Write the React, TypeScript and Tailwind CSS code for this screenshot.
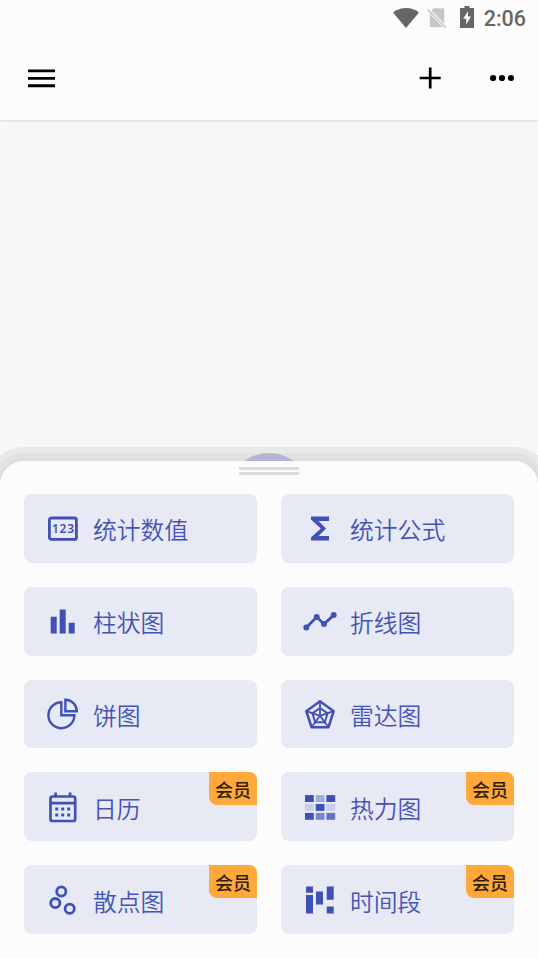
import type { ReactNode } from "react";

const PRIMARY = "#3f51b5";

function Icon({ children }: { children: ReactNode }) {
  return (
    <svg className="block h-9 w-9 shrink-0 text-[#3f51b5]" viewBox="0 0 36 36" fill="none">
      {children}
    </svg>
  );
}

function NumbersIcon() {
  return (
    <Icon>
      <rect x="4.4" y="8" width="27" height="21.4" rx="2" stroke="currentColor" strokeWidth="2.8" />
      <text
        x="18.4"
        y="23"
        textAnchor="middle"
        fill="currentColor"
        className="font-['Noto_Sans',sans-serif] text-[12px] font-semibold"
        letterSpacing="0.8"
      >
        123
      </text>
    </Icon>
  );
}

function SigmaIcon() {
  return (
    <Icon>
      <path
        transform="translate(0 .5) scale(1.5)"
        d="M18 4H6v2l6.5 6L6 18v2h12v-3h-7l5-5-5-5h7z"
        fill="currentColor"
      />
    </Icon>
  );
}

function BarsIcon() {
  return (
    <Icon>
      <path d="M5.7 13.8h6v16.7h-6zM14.7 6.5h6v24h-6zM23.7 19.8h6v10.7h-6z" fill="currentColor" />
    </Icon>
  );
}

function LineIcon() {
  return (
    <Icon>
      <path d="M4.3 24.5 14.7 14.1 22 21.1 31.7 12.1" stroke="currentColor" strokeWidth="2.8" />
      <g fill="currentColor">
        <circle cx="4.3" cy="24.5" r="3" />
        <circle cx="14.7" cy="14.1" r="3" />
        <circle cx="22" cy="21.1" r="3" />
        <circle cx="31.7" cy="12.1" r="3" />
      </g>
    </Icon>
  );
}

function PieIcon() {
  return (
    <Icon>
      <g stroke="currentColor" strokeWidth="2.4">
        <path d="M16.3 6.2V19.3H29.4A13 13 0 1 1 16.3 6.2z" />
        <path d="M20.4 3.8V15.3H31.8A11.5 11.5 0 0 0 20.4 3.8z" />
      </g>
    </Icon>
  );
}

function RadarIcon() {
  return (
    <Icon>
      <g stroke="currentColor" strokeLinejoin="round">
        <path d="M18 5.2 31.7 15.2 26.5 31.2H9.5L4.3 15.2z" strokeWidth="2.6" />
        <path d="M18 12 25.6 17.4 22.7 26.2H13.3L10.4 17.4z" strokeWidth="2" />
        <path
          d="M18 19.8V5.2M18 19.8 31.7 15.2M18 19.8 26.5 31.2M18 19.8 9.5 31.2M18 19.8 4.3 15.2"
          strokeWidth="1.8"
        />
      </g>
    </Icon>
  );
}

function CalendarIcon() {
  return (
    <Icon>
      <rect x="5.5" y="7.5" width="24.7" height="24.5" rx="2" stroke="currentColor" strokeWidth="2.7" />
      <path d="M5.5 14.2h24.7M10.6 3.5v4M25.1 3.5v4" stroke="currentColor" strokeWidth="2.7" />
      <path
        d="M10.2 18.4h3v3h-3zM16.2 18.4h3v3h-3zM22.2 18.4h3v3h-3zM10.2 24.4h3v3h-3zM16.2 24.4h3v3h-3zM22.2 24.4h3v3h-3z"
        fill="currentColor"
      />
    </Icon>
  );
}

function HeatIcon() {
  const cells = [
    [PRIMARY, "#a3abdb", PRIMARY],
    ["#c9cdea", PRIMARY, "#c9cdea"],
    [PRIMARY, "#7986cb", "#6572c3"],
  ];
  return (
    <Icon>
      {cells.map((row, r) =>
        row.map((fill, c) => (
          <rect key={`${r}-${c}`} x={3 + c * 10.7} y={6.1 + r * 8.9} width="8.8" height="6.9" fill={fill} />
        )),
      )}
    </Icon>
  );
}

function ScatterIcon() {
  return (
    <Icon>
      <g stroke="currentColor" strokeWidth="2.8">
        <circle cx="16.3" cy="9.4" r="4.6" />
        <circle cx="10.3" cy="21.1" r="4.6" />
        <circle cx="24.7" cy="26.7" r="4.6" />
      </g>
    </Icon>
  );
}

function SlotsIcon() {
  return (
    <Icon>
      <path
        d="M4 4.4h7v6.4H4zM4 13.1h7v18.3H4zM14 9.4h7v13h-7zM24.7 4.4h7v13.3h-7zM24.7 24.4h7v7h-7z"
        fill="currentColor"
      />
    </Icon>
  );
}

const items: { label: string; icon: ReactNode; vip?: boolean }[] = [
  { label: "统计数值", icon: <NumbersIcon /> },
  { label: "统计公式", icon: <SigmaIcon /> },
  { label: "柱状图", icon: <BarsIcon /> },
  { label: "折线图", icon: <LineIcon /> },
  { label: "饼图", icon: <PieIcon /> },
  { label: "雷达图", icon: <RadarIcon /> },
  { label: "日历", icon: <CalendarIcon />, vip: true },
  { label: "热力图", icon: <HeatIcon />, vip: true },
  { label: "散点图", icon: <ScatterIcon />, vip: true },
  { label: "时间段", icon: <SlotsIcon />, vip: true },
];

function StatusBar() {
  return (
    <div className="flex h-9 items-center justify-end pr-3 text-[#666]">
      <svg className="h-5 w-[26px]" viewBox="0 0 26 20">
        <path d="M0 4.600C3.500 1.600 8 0 13 0s9.500 1.600 13 4.600L13 20z" fill="currentColor" />
      </svg>
      <svg className="ml-2 h-5 w-5" viewBox="0 0 20 20">
        <path d="M6.500 .3h9.800q1 0 1 1v14.200L4.600 2.800zM2.800 5 16.600 18.800q-.3.5-1 .5H3.800q-1 0-1-1z" fill="#c6c6c6" />
        <path d="M.8 1.800 18.900 19.600" stroke="#fcfcfc" strokeWidth="3.200" />
        <path d="M.6 1.600 18.900 19.600" stroke="#c6c6c6" strokeWidth="1.500" />
      </svg>
      <svg className="ml-[13px] h-[22px] w-[14px] -translate-y-px" viewBox="0 0 14 22">
        <path d="M4.500 0h5v2H14v20H0V2h4.500z" fill="currentColor" />
        <path d="M8 5.200 3.200 12.800h3.100v5.800l4.600-8H8z" fill="#fcfcfc" />
      </svg>
      <span className="ml-[10px] mt-px font-['Roboto',sans-serif] text-[21.5px] font-medium leading-none">2:06</span>
    </div>
  );
}

export default function App() {
  return (
    <div className="flex h-[958px] w-[538px] flex-col overflow-hidden bg-[#f7f7f7] font-['Noto_Sans_CJK_SC',sans-serif]">
      <header className="h-[120px] shrink-0 bg-[#fcfcfc] shadow-[0_1px_2px_rgba(0,0,0,0.12)]">
        <StatusBar />
        <div className="flex h-[84px] items-center pl-7 pr-6 text-black">
          <svg className="h-[19px] w-[27px]" viewBox="0 0 27 19">
            <path d="M0 1.900h27M0 9.400h27M0 16.700h27" stroke="currentColor" strokeWidth="2.900" />
          </svg>
          <svg className="ml-auto h-[22px] w-[22px]" viewBox="0 0 22 22">
            <path d="M11.200 .5v21M.7 11h21" stroke="currentColor" strokeWidth="2.700" />
          </svg>
          <svg className="ml-[49px] h-2 w-6" viewBox="0 0 24 8">
            <circle cx="3.100" cy="4" r="3.100" />
            <circle cx="12" cy="4" r="3.100" />
            <circle cx="20.900" cy="4" r="3.100" />
          </svg>
        </div>
      </header>

      <main className="h-[341px] shrink-0" />

      <section className="relative flex-1">
        <div className="absolute inset-0 rounded-t-[24px] shadow-[0_0_0_3px_#dedede,0_0_0_8px_#e2e2e2,0_0_0_14px_#e9e9e9]" />
        <div className="absolute left-[226px] top-[-8px] h-[86px] w-[86px] rounded-full bg-[#b1b5d6]" />
        <div className="relative flex h-full flex-col rounded-t-[24px] bg-[#fcfcfd]">
          <div className="mx-auto mt-[6px] h-2 w-[60px] border-y-[3px] border-[#dcdcdc]" />
          <div className="mt-[19px] grid grid-cols-2 gap-6 px-6">
            {items.map((item) => (
              <button
                key={item.label}
                className="relative flex h-[68.8px] items-center gap-3 overflow-hidden rounded-lg bg-[#e7e9f5] pl-[21px] text-left"
              >
                {item.icon}
                <span className="pt-[2px] text-[23.8px] font-[350] leading-9 text-[#4453b5]">{item.label}</span>
                {item.vip && (
                  <span className="absolute right-0 top-0 flex h-[33px] w-12 items-center justify-center rounded-bl-lg bg-[#ffa93a] text-[18px] font-medium leading-none text-[#301d08]">
                    会员
                  </span>
                )}
              </button>
            ))}
          </div>
        </div>
      </section>
    </div>
  );
}
